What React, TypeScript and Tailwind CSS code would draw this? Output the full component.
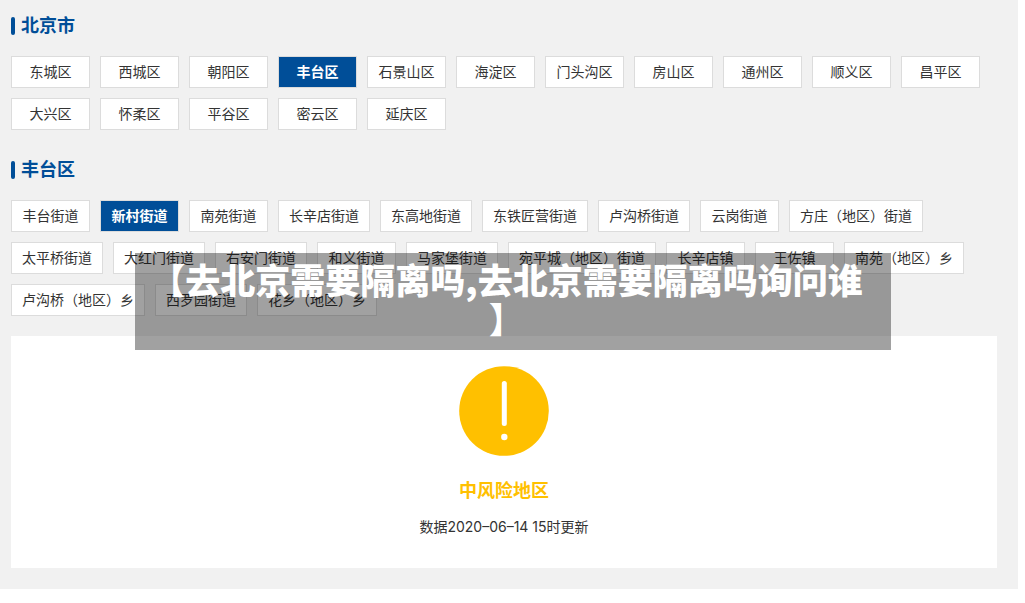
const districts = [
  '东城区', '西城区', '朝阳区', '丰台区', '石景山区', '海淀区', '门头沟区', '房山区',
  '通州区', '顺义区', '昌平区', '大兴区', '怀柔区', '平谷区', '密云区', '延庆区',
];

const streets = [
  '丰台街道', '新村街道', '南苑街道', '长辛店街道', '东高地街道', '东铁匠营街道', '卢沟桥街道',
  '云岗街道', '方庄（地区）街道', '太平桥街道', '大红门街道', '右安门街道', '和义街道',
  '马家堡街道', '宛平城（地区）街道', '长辛店镇', '王佐镇', '南苑（地区）乡',
  '卢沟桥（地区）乡', '西罗园街道', '花乡（地区）乡',
];

type AreaGroupProps = { title: string; items: string[]; selected: string };

function AreaGroup({ title, items, selected }: AreaGroupProps) {
  return (
    <section>
      <h2 className="flex h-7 items-center gap-1.5 text-lg font-bold text-[#004e98]">
        <span className="h-[18px] w-1 rounded-xs bg-[#004e98]" />
        {title}
      </h2>
      <div className="mt-4 flex flex-wrap gap-2.5">
        {items.map((item) => (
          <button
            key={item}
            type="button"
            aria-pressed={item === selected}
            className={
              item === selected
                ? 'h-8 min-w-[79px] border border-[#dcdcdc] bg-[#004e98] px-2.5 text-sm font-bold text-white'
                : 'h-8 min-w-[79px] border border-[#dcdcdc] bg-white px-2.5 text-sm text-[#333333]'
            }
          >
            {item}
          </button>
        ))}
      </div>
    </section>
  );
}

export default function App() {
  return (
    <div className="relative min-h-screen bg-white font-[Inter,'Noto_Sans_CJK_SC',sans-serif]">
      <main className="mr-[7px] bg-[#f1f1f1] pt-3 pr-[21px] pb-[21px] pl-[11px]">
        <div className="flex flex-col gap-[26px]">
          <AreaGroup title="北京市" items={districts} selected="丰台区" />
          <AreaGroup title="丰台区" items={streets} selected="新村街道" />
        </div>
        <section className="mt-5 flex flex-col items-center bg-white pt-[30px] pb-[31px]">
          <svg className="size-[90px]" viewBox="0 0 90 90" aria-hidden="true">
            <circle cx="45" cy="45" r="44.8" fill="#ffc000" />
            <path d="M45.3 17.5V57.5" stroke="#fff" strokeWidth="5" strokeLinecap="round" />
            <circle cx="45.3" cy="71" r="3.2" fill="#fff" />
          </svg>
          <p className="mt-[21px] text-lg font-bold text-[#ffc000]">中风险地区</p>
          <p className="mt-3 text-sm text-[#333333]">数据2020–06–14 15时更新</p>
        </section>
      </main>
      <div className="pointer-events-none absolute inset-0 flex items-center justify-center">
        <h1 className="w-full max-w-[756px] bg-black/37 pt-1.5 pr-6 pb-[13px] pl-3 text-center font-['Noto_Sans_CJK_SC',sans-serif] text-[35px] leading-[39px] font-black text-white">
          【去北京需要隔离吗,去北京需要隔离吗询问谁
          <wbr />】
        </h1>
      </div>
    </div>
  );
}
